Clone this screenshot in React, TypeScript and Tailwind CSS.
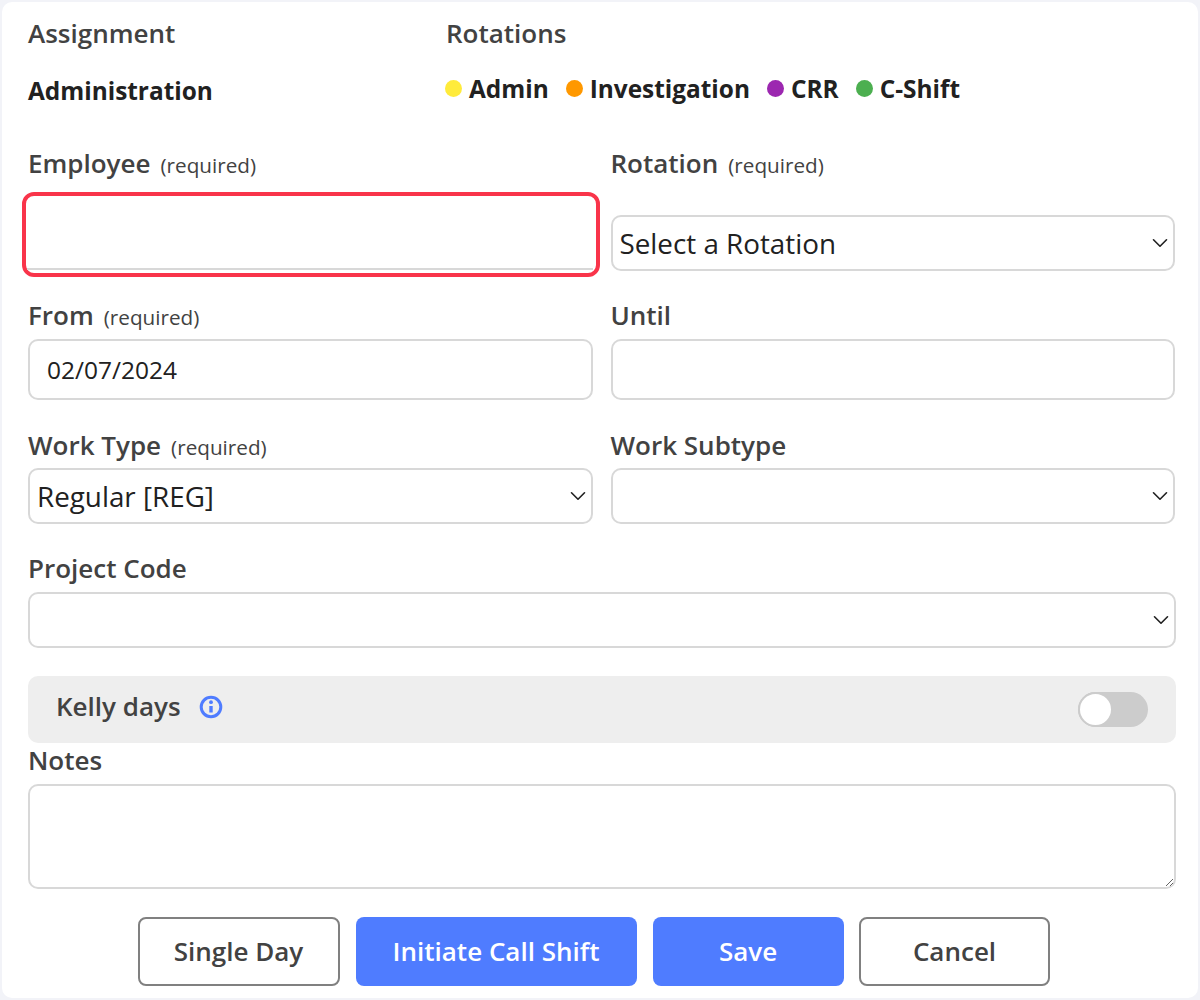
import React from 'react';
import { ChevronDown } from 'lucide-react';

const rotations = [
  { name: 'Admin', color: 'bg-[#ffeb3b]' },
  { name: 'Investigation', color: 'bg-[#ff9800]' },
  { name: 'CRR', color: 'bg-[#9c27b0]' },
  { name: 'C-Shift', color: 'bg-[#4caf50]' },
];

const FieldLabel: React.FC<{ text: string; required?: boolean }> = ({ text, required }) => (
  <label className="flex items-baseline h-[32px] text-[26px] leading-[32px] font-semibold text-[#424242]">
    {text}
    {required && <span className="ml-[10px] text-[20.7px] font-normal">(required)</span>}
  </label>
);

const SelectBox: React.FC<{ value?: string }> = ({ value }) => (
  <div className="relative h-[56px] rounded-[10px] border-2 border-[#d8d8d8] bg-white">
    <select
      defaultValue={value ?? ''}
      className="w-full h-full appearance-none bg-transparent pl-[7px] pr-8 pt-[2px] text-[27.8px] text-[#212121] outline-none"
    >
      <option value={value ?? ''}>{value ?? ''}</option>
    </select>
    <ChevronDown className="absolute right-0 top-[13px] w-[26px] h-[26px] text-[#212121] pointer-events-none" strokeWidth={1.5} />
  </div>
);

const TextBox: React.FC<{ value?: string }> = ({ value }) => (
  <input
    defaultValue={value}
    className="w-full h-[61px] rounded-[10px] border-2 border-[#d8d8d8] bg-white px-[17px] text-[24.5px] text-[#212121] outline-none"
  />
);

export default function App() {
  return (
    <div className="w-[1200px] h-[1000px] bg-[#f2f3f8] pt-[2px] pb-[2px] px-[2px] font-['Open_Sans',sans-serif] overflow-hidden">
      <div className="h-[996px] rounded-[10px] bg-white pl-[26px] pr-[22px] pt-[13px]">
        <div className="flex h-[36px] items-center text-[26px] font-semibold text-[#424242]">
          <div className="w-[418px]">Assignment</div>
          <div>Rotations</div>
        </div>
        <div className="flex h-[40px] mt-[18px] items-center text-[24.4px] font-bold text-[#212121]">
          <div className="w-[417px] pt-[5px]">Administration</div>
          <div className="flex items-center">
            {rotations.map((r) => (
              <div key={r.name} className="flex items-center mr-[17px]">
                <span className={`w-[17px] h-[17px] rounded-full mr-[7px] ${r.color}`}></span>
                {r.name}
              </div>
            ))}
          </div>
        </div>

        <div className="grid grid-cols-[565px_564.5px] gap-x-[17.5px] mt-[38px]">
          <div>
            <FieldLabel text="Employee" required />
            <div className="-ml-[6px] -mr-[7px] mt-[13px] h-[85px] rounded-[12px] border-[4px] border-[#f9344a] pl-[1px] pr-[3px]">
              <input className="w-full h-[74px] bg-transparent border-b-2 border-[#d8d8d8] outline-none" />
            </div>
          </div>
          <div>
            <FieldLabel text="Rotation" required />
            <div className="mt-[36px]">
              <SelectBox value="Select a Rotation" />
            </div>
          </div>

          <div className="mt-[22px]">
            <FieldLabel text="From" required />
            <div className="mt-[8px]">
              <TextBox value="02/07/2024" />
            </div>
          </div>
          <div className="mt-[22px]">
            <FieldLabel text="Until" />
            <div className="mt-[8px]">
              <TextBox />
            </div>
          </div>

          <div className="mt-[29px]">
            <FieldLabel text="Work Type" required />
            <div className="mt-[7px]">
              <SelectBox value="Regular [REG]" />
            </div>
          </div>
          <div className="mt-[29px]">
            <FieldLabel text="Work Subtype" />
            <div className="mt-[7px]">
              <SelectBox />
            </div>
          </div>
        </div>

        <div className="mt-[28px]">
          <FieldLabel text="Project Code" />
          <div className="mt-[8px]">
            <SelectBox />
          </div>
        </div>

        <div className="mt-[28px] h-[67px] rounded-[10px] bg-[#eeeeee] pl-[28px] pr-[28px] flex items-center justify-between">
          <div className="flex items-center mb-[6px] text-[26px] font-semibold text-[#424242]">
            Kelly days
            <svg className="ml-[18px]" width="24" height="24" viewBox="0 0 24 24" fill="none" stroke="#4f7cff" strokeWidth="3">
              <circle cx="12" cy="12" r="9.8" />
              <path d="M12 11v6.5" strokeWidth="3.4" />
              <circle cx="12" cy="7.2" r="1.9" fill="#4f7cff" stroke="none" />
            </svg>
          </div>
          <div className="w-[70px] h-[35px] rounded-full bg-[#cccccc]">
            <div className="w-[35px] h-[35px] rounded-full bg-white border-2 border-[#cccccc]"></div>
          </div>
        </div>

        <div className="mt-[1px]">
          <FieldLabel text="Notes" />
          <textarea className="block w-full h-[105px] mt-[8px] rounded-[10px] border-2 border-[#d8d8d8] bg-white outline-none" />
        </div>

        <div className="flex justify-center gap-[16px] mt-[28px] pr-[16px] text-[26px] font-semibold">
          <button className="w-[202px] h-[69px] pr-px rounded-[8px] border-2 border-[#808080] bg-white text-[#424242]">Single Day</button>
          <button className="w-[281px] h-[69px] pr-px rounded-[8px] bg-[#4f7cff] text-white">Initiate Call Shift</button>
          <button className="w-[191px] h-[69px] pr-px rounded-[8px] bg-[#4f7cff] text-white">Save</button>
          <button className="w-[191px] h-[69px] -ml-px rounded-[8px] border-2 border-[#808080] bg-white text-[#424242]">Cancel</button>
        </div>
      </div>
    </div>
  );
}
